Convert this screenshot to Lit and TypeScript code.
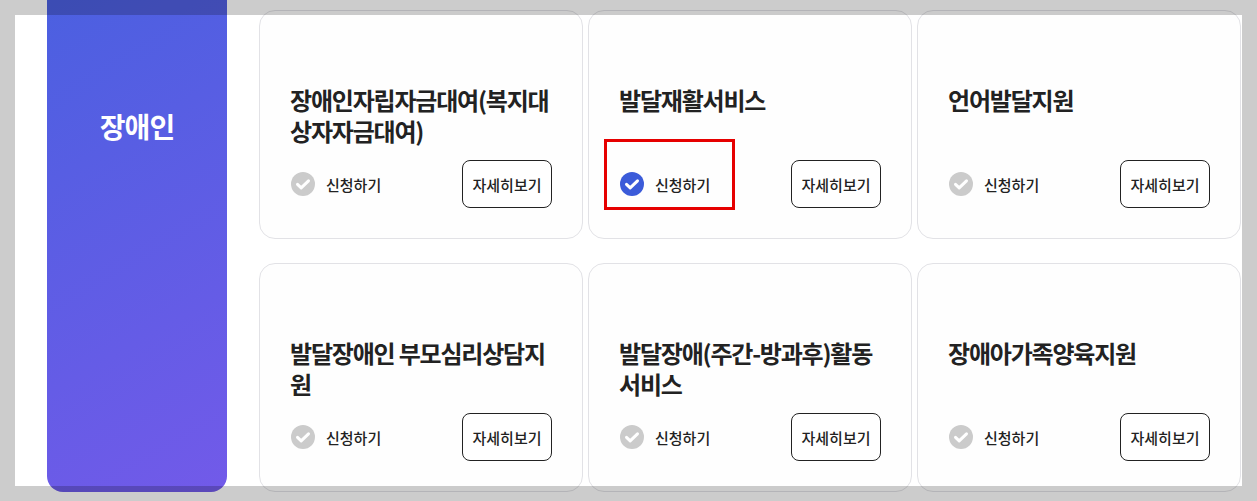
import { css, html, LitElement } from 'lit';
import { customElement } from 'lit/decorators.js';
import { classMap } from 'lit/directives/class-map.js';

type Service = { title: string; active?: boolean };

const services: Service[] = [
  { title: '장애인자립자금대여(복지대상자자금대여)' },
  { title: '발달재활서비스', active: true },
  { title: '언어발달지원' },
  { title: '발달장애인 부모심리상담지원' },
  { title: '발달장애(주간-방과후)활동서비스' },
  { title: '장애아가족양육지원' },
];

@customElement('app-root')
export class AppRoot extends LitElement {
  static styles = css`
    :host {
      display: block;
      position: relative;
      width: 1257px;
      height: 501px;
      overflow: hidden;
      background: #fff;
      color: #222;
      font-family: "Noto Sans CJK KR", "Noto Sans", sans-serif;
    }

    .page {
      display: flex;
      gap: 32px;
      padding: 10px 0 0 47px;
    }

    .category {
      flex: none;
      box-sizing: border-box;
      width: 180px;
      height: 512px;
      margin-top: -30px;
      padding-top: 128px;
      border-radius: 0 0 16px 16px;
      background: linear-gradient(150deg, #4a60e0 0%, #725ae9 100%);
      color: #fff;
      font-size: 28px;
      font-weight: 700;
      line-height: 36px;
      letter-spacing: -1px;
      text-align: center;
    }

    .grid {
      display: grid;
      grid-template-columns: repeat(3, 324px);
      grid-auto-rows: 229px;
      column-gap: 5px;
      row-gap: 24px;
    }

    .card {
      position: relative;
      box-sizing: border-box;
      display: flex;
      flex-direction: column;
      padding: 73px 30px 30px 30px;
      border: 1px solid #e2e2e6;
      border-radius: 16px;
      background: #fefefe;
    }

    .title {
      margin: 0;
      font-size: 24px;
      font-weight: 700;
      line-height: 31px;
      letter-spacing: -1.2px;
      color: #222;
      word-break: break-all;
    }

    .actions {
      display: flex;
      align-items: center;
      justify-content: space-between;
      margin-top: auto;
    }

    .apply {
      display: flex;
      align-items: center;
      gap: 11px;
      margin-left: 1px;
      font-size: 15px;
      font-weight: 500;
      letter-spacing: 0;
    }

    .check {
      display: block;
      width: 24px;
      height: 24px;
      fill: #cbcbcb;
    }

    .active .check {
      fill: #3b5bd9;
    }

    .details {
      box-sizing: border-box;
      width: 90px;
      height: 48px;
      padding: 0;
      border: 1px solid #222;
      border-radius: 8px;
      background: #fff;
      color: #222;
      font: inherit;
      font-size: 15px;
      font-weight: 500;
      letter-spacing: 0;
    }

    .highlight {
      position: absolute;
      left: 15px;
      top: 128px;
      box-sizing: border-box;
      width: 131px;
      height: 71px;
      border: 3px solid #e60000;
    }

    .dim {
      position: absolute;
      left: 15px;
      top: 15px;
      width: 1227px;
      height: 471px;
      box-shadow: 0 0 0 1300px rgba(0, 0, 0, 0.2);
      pointer-events: none;
    }
  `;

  private renderCard(item: Service) {
    return html`
      <article class=${classMap({ card: true, active: !!item.active })}>
        <h3 class="title">${item.title}</h3>
        <div class="actions">
          <label class="apply">
            <svg class="check" viewBox="0 0 24 24">
              <circle cx="12" cy="12" r="12"></circle>
              <path d="M6.5 12.3l3.7 3.6L17.5 8.8" fill="none" stroke="#fff" stroke-width="3" stroke-linecap="round" stroke-linejoin="round"></path>
            </svg>
            신청하기
          </label>
          <button class="details">자세히보기</button>
        </div>
        ${item.active ? html`<span class="highlight"></span>` : ''}
      </article>
    `;
  }

  render() {
    return html`
      <div class="page">
        <div class="category">장애인</div>
        <div class="grid">${services.map((s) => this.renderCard(s))}</div>
      </div>
      <div class="dim"></div>
    `;
  }
}
